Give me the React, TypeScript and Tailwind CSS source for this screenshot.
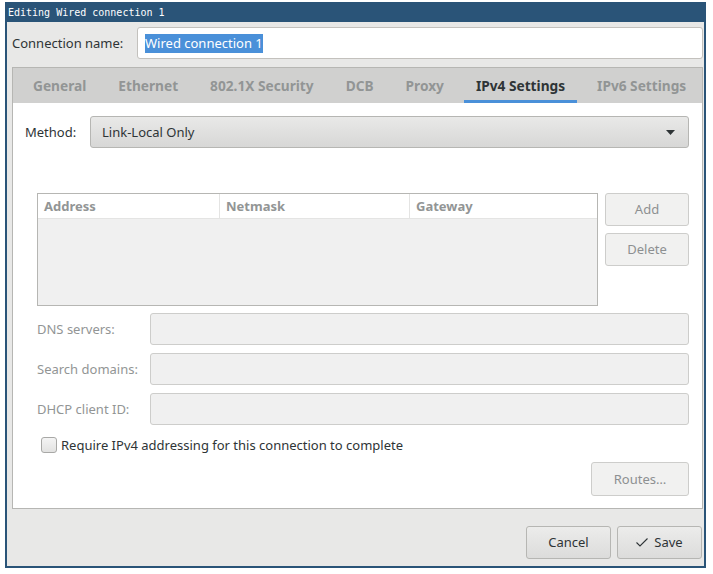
const TABS = ["General", "Ethernet", "802.1X Security", "DCB", "Proxy", "IPv4 Settings", "IPv6 Settings"];

const FIELDS = ["DNS servers:", "Search domains:", "DHCP client ID:"];

function DisabledButton({ label, className = "" }: { label: string; className?: string }) {
  return (
    <div
      className={`flex items-center justify-center rounded-[3px] border border-[#cdcdcb] bg-[#f1f1f0] text-[#8d9091] ${className}`}
    >
      {label}
    </div>
  );
}

function Tabs() {
  return (
    <div className="flex h-[35px] shrink-0 items-stretch bg-[#d0d0cf] pl-[4px] text-[13.7px]">
      {TABS.map((t) => {
        const active = t === "IPv4 Settings";
        return (
          <div key={t} className="relative flex shrink-0 items-center whitespace-nowrap px-[16px]">
            <span className={`font-bold ${active ? "text-[#2e3436]" : "text-[#929595]"}`}>{t}</span>
            {active && <div className="absolute bottom-0 left-[4px] right-[4px] h-[3px] bg-[#4a90d9]" />}
          </div>
        );
      })}
    </div>
  );
}

function Ipv4Page() {
  return (
    <div className="flex flex-1 flex-col bg-white pr-[13px]">
      <div className="mt-[13px] flex h-[32px] items-center pl-[12px]">
        <span className="w-[65px] text-[#2e3436]">Method:</span>
        <div className="flex h-full flex-1 items-center justify-between rounded-[3px] border border-[#b6b6b3] bg-gradient-to-b from-[#e9e9e8] to-[#d7d7d6] pl-[11px] pr-[13px] text-[#2e3436]">
          <span>Link-Local Only</span>
          <svg width="9" height="5" viewBox="0 0 9 5">
            <polygon points="0,0 9,0 4.5,5" fill="#2e3436" />
          </svg>
        </div>
      </div>

      <div className="mt-[45px] flex gap-[7px] pl-[24px]">
        <div className="flex h-[113px] flex-1 flex-col border border-[#b6b6b3] bg-[#f0f0f0]">
          <div className="flex h-[25px] border-b border-[#e4e4e3] bg-white font-bold text-[#929595]">
            <div className="flex w-[182px] items-center border-r border-[#e4e4e3] pl-[6px]">Address</div>
            <div className="flex w-[190px] items-center border-r border-[#e4e4e3] pl-[6px]">Netmask</div>
            <div className="flex flex-1 items-center pl-[6px]">Gateway</div>
          </div>
        </div>
        <div className="flex w-[84px] flex-col gap-[7px]">
          <DisabledButton label="Add" className="h-[33px]" />
          <DisabledButton label="Delete" className="h-[33px]" />
        </div>
      </div>

      <div className="mt-[7px] flex flex-col gap-[8px] pl-[24px]">
        {FIELDS.map((f) => (
          <div key={f} className="flex h-[32px] items-center">
            <span className="w-[113px] text-[#929595]">{f}</span>
            <div className="h-full flex-1 rounded-[3px] border border-[#cdcdcb] bg-[#f0f0f0]" />
          </div>
        ))}
      </div>

      <div className="mt-[11px] flex h-[18px] items-center pl-[28px]">
        <div className="h-[16px] w-[16px] rounded-[3px] border border-[#a8a8a6] bg-gradient-to-b from-[#f4f4f4] to-[#e2e2e1]" />
        <span className="ml-[4px] text-[#2e3436]">Require IPv4 addressing for this connection to complete</span>
      </div>

      <div className="mt-[8px] flex justify-end">
        <DisabledButton label="Routes…" className="h-[34px] w-[98px]" />
      </div>
    </div>
  );
}

export default function App() {
  return (
    <div
      className="h-[574px] w-[713px] bg-white pl-[5px] pt-[2px] text-[13px] leading-none"
      style={{ fontFamily: '"Noto Sans", "Open Sans", sans-serif' }}
    >
      <div className="flex h-[566px] w-[701px] flex-col border-2 border-t-0 border-[#2a5478] bg-[#e8e8e7]">
        <div
          className="h-[20px] shrink-0 bg-[#2a5478] pl-[1px] pt-[3px] text-[10px] leading-[16px] text-white"
          style={{ fontFamily: '"DejaVu Sans Mono", monospace' }}
        >
          Editing Wired connection 1
        </div>

        <div className="flex flex-1 flex-col pl-[5px] pr-[1px]">
          <div className="mt-[5px] flex h-[32px] items-center">
            <span className="w-[125px] text-[#2e3436]">Connection name:</span>
            <div className="flex h-full flex-1 items-center rounded-[3px] border border-[#c3c1bd] bg-white pl-[7px]">
              <span className="bg-[#4a90d9] py-[2px] leading-[15px] text-white">Wired connection 1</span>
            </div>
          </div>

          <div className="mt-[8px] flex h-[442px] flex-col border border-[#b6b6b3]">
            <Tabs />
            <Ipv4Page />
          </div>

          <div className="mt-[17px] flex justify-end gap-[6px] pr-[1px]">
            <div className="flex h-[33px] w-[85px] items-center justify-center rounded-[3px] border border-[#b6b6b3] bg-gradient-to-b from-[#ececeb] to-[#dcdcdb] text-[#2e3436]">
              Cancel
            </div>
            <div className="flex h-[33px] w-[85px] items-center justify-center gap-[6px] rounded-[3px] border border-[#b6b6b3] bg-gradient-to-b from-[#ececeb] to-[#dcdcdb] text-[#2e3436]">
              <svg width="12" height="9" viewBox="0 0 12 9">
                <polyline points="0.5,4.5 4,8 11.5,0.5" fill="none" stroke="#2e3436" strokeWidth="1.1" />
              </svg>
              <span>Save</span>
            </div>
          </div>
        </div>
      </div>
    </div>
  );
}
